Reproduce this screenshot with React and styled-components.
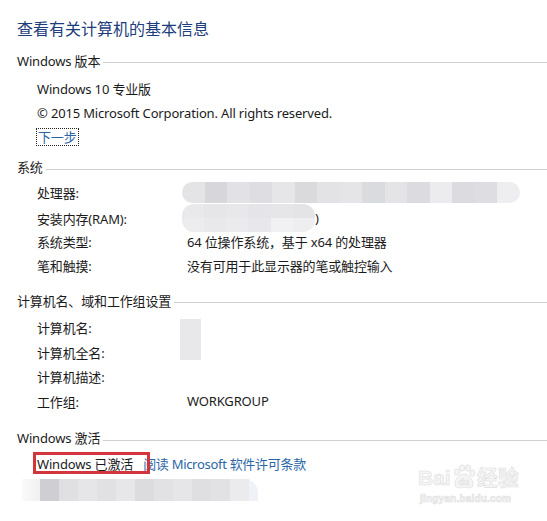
import React from "react";
import styled, { createGlobalStyle } from "styled-components";

const Global = createGlobalStyle`
  html, body { margin: 0; padding: 0; background: #fff; }
  body {
    font-family: "Noto Sans", "Noto Sans CJK SC", sans-serif;
    color: #1b1b1b;
    letter-spacing: -0.16px;
    overflow: hidden;
  }
`;

const Page = styled.div`
  position: relative;
  width: 547px;
  height: 521px;
  padding: 16px 0 0 17px;
  box-sizing: border-box;
  display: flex;
  flex-direction: column;
  overflow: hidden;
`;

const Title = styled.h1`
  margin: 0;
  height: 24px;
  line-height: 24px;
  font-size: 16px;
  font-weight: 400;
  letter-spacing: 0;
  color: #1d3d7c;
  font-family: "Noto Sans CJK SC", sans-serif;
`;

const Section = styled.section`
  display: flex;
  flex-direction: column;
  margin-top: ${(p) => p.$top}px;
`;

const Header = styled.div`
  display: flex;
  align-items: center;
  height: 20px;
  font-size: 13px;
  margin-bottom: ${(p) => p.$gap}px;
  &::after {
    content: "";
    flex: 1;
    height: 1px;
    background: #cfcfcf;
    margin: 5px 0 0 3px;
  }
`;

const Rows = styled.div`
  display: flex;
  flex-direction: column;
  padding-left: 20px;
`;

const Row = styled.div`
  position: relative;
  display: grid;
  grid-template-columns: 150px 1fr;
  align-items: center;
  height: 24.6px;
  font-size: 13px;
`;

const Line = styled.div`
  display: flex;
  align-items: center;
  height: 24.6px;
  font-size: 13px;
`;

const NextLink = styled.span`
  color: #2a66a6;
  font-size: 13px;
  outline: 1px dotted #222;
  outline-offset: 0;
  padding: 0 1px;
  line-height: 16px;
`;

const Mosaic = styled.div`
  display: flex;
  width: ${(p) => p.$w}px;
  height: ${(p) => p.$h}px;
  border-radius: ${(p) => p.$h / 2}px;
  overflow: hidden;
  margin-left: -5px;
`;

const Cell = styled.div`
  flex: 1;
  background: ${(p) => p.$c};
`;

const Mosaic2 = styled.div`
  display: grid;
  grid-template-columns: repeat(${(p) => p.$cols}, 1fr);
  grid-template-rows: repeat(2, 1fr);
  width: ${(p) => p.$w}px;
  height: ${(p) => p.$h}px;
  border-radius: 12px;
  overflow: hidden;
  margin-left: -5px;
`;

const ValueWrap = styled.div`
  display: flex;
  align-items: center;
`;

const NameBlur = styled.div`
  position: absolute;
  left: 143px;
  top: 4px;
  width: 21px;
  height: 41px;
  background: #e8e7ea;
`;

const Activated = styled.div`
  position: relative;
  display: flex;
  align-items: center;
  gap: 10px;
  height: 24.6px;
  font-size: 13px;
`;

const RedBox = styled.div`
  position: absolute;
  left: -4px;
  top: 0px;
  width: 111px;
  height: 16px;
  border: 3px solid #d2363c;
`;

const Link = styled.span`
  color: #2a66a6;
  letter-spacing: -0.3px;
`;

const BottomBlur = styled.div`
  display: flex;
  margin: 3px 0 0 5px;
  width: 236px;
  height: 22px;
  background: linear-gradient(90deg, #fafafa 0%, #eeeeef 10%, #f4f4f6 85%, #eef2f8 100%);
  border-radius: 0 14px 0 0;
  padding-left: 18px;
  box-sizing: border-box;
`;

const BlurCell = styled.div`
  width: 19px;
  background: ${(p) => p.$c};
`;

const Watermark = styled.div`
  position: absolute;
  left: 418px;
  top: 464px;
  display: flex;
  flex-direction: column;
  align-items: flex-start;
  color: #f5f5f5;
  -webkit-text-stroke: 0.6px #e0e0e0;
  letter-spacing: 0;
  font-family: "Liberation Sans", "Noto Sans CJK SC", sans-serif;
`;

const MarkTop = styled.div`
  display: flex;
  align-items: flex-end;
  font-size: 21px;
  font-weight: 700;
  line-height: 24px;
`;

const MarkSub = styled.div`
  font-size: 10px;
  font-weight: 700;
  margin-top: 3px;
  margin-left: 2px;
  letter-spacing: 0.2px;
`;

const procColors = ["#e4e3e6", "#d7d6db", "#e2e1e5", "#dedde1", "#e6e5e8", "#dadadc", "#e3e3e6", "#e5e5e8", "#dadbdf", "#e4e3e5", "#dcdbdf", "#ecebee", "#dcdbdf", "#dedde2", "#eeeef1"];
const ramColors = ["#e9e8ea", "#e6e5e8", "#e8e7ea", "#e5e4e8", "#e6e6e9", "#e4e4e7", "#ececef", "#e9e9ec", "#ebebee", "#e8e7eb", "#f1f1f3", "#eeeef1"];
const bottomColors = ["#cfced2", "#e0e0e2", "#e6e5e7", "#e1e1e3", "#e7e6e8", "#dcdbdd", "#e2e1e3", "#e6e6e8", "#dfdfe1", "#e2e2e4", "#ebebed"];

export default function App() {
  return (
    <>
      <Global />
      <Page>
        <Title>查看有关计算机的基本信息</Title>

        <Section $top={10}>
          <Header $gap={6}>Windows 版本</Header>
          <Rows>
            <Line>Windows 10 专业版</Line>
            <Line>© 2015 Microsoft Corporation. All rights reserved.</Line>
            <Line>
              <NextLink>下一步</NextLink>
            </Line>
          </Rows>
        </Section>

        <Section $top={7}>
          <Header $gap={3}>系统</Header>
          <Rows>
            <Row>
              <span>处理器:</span>
              <Mosaic $w={338} $h={21}>
                {procColors.map((c, i) => (
                  <Cell key={i} $c={c} />
                ))}
              </Mosaic>
            </Row>
            <Row>
              <span>安装内存(RAM):</span>
              <ValueWrap>
                <Mosaic2 $w={133} $h={28} $cols={6}>
                  {ramColors.map((c, i) => (
                    <Cell key={i} $c={c} />
                  ))}
                </Mosaic2>
                <span>)</span>
              </ValueWrap>
            </Row>
            <Row>
              <span>系统类型:</span>
              <span>64 位操作系统，基于 x64 的处理器</span>
            </Row>
            <Row>
              <span>笔和触摸:</span>
              <span>没有可用于此显示器的笔或触控输入</span>
            </Row>
          </Rows>
        </Section>

        <Section $top={12}>
          <Header $gap={5}>计算机名、域和工作组设置</Header>
          <Rows>
            <Row>
              <span>计算机名:</span>
              <span />
              <NameBlur />
            </Row>
            <Row>
              <span>计算机全名:</span>
              <span />
            </Row>
            <Row>
              <span>计算机描述:</span>
              <span />
            </Row>
            <Row>
              <span>工作组:</span>
              <span>WORKGROUP</span>
            </Row>
          </Rows>
        </Section>

        <Section $top={14}>
          <Header $gap={4}>Windows 激活</Header>
          <Rows>
            <Activated>
              <span>Windows 已激活</span>
              <Link>阅读 Microsoft 软件许可条款</Link>
              <RedBox />
            </Activated>
          </Rows>
          <BottomBlur>
            {bottomColors.map((c, i) => (
              <BlurCell key={i} $c={c} />
            ))}
          </BottomBlur>
        </Section>

        <Watermark>
          <MarkTop>
            <span>Bai</span>
            <svg width="26" height="26" viewBox="0 0 26 26">
              <g fill="#f5f5f5" stroke="#dedede" strokeWidth="0.8">
                <ellipse cx="6" cy="8" rx="2.6" ry="3.2" />
                <ellipse cx="11" cy="4" rx="2.6" ry="3.2" />
                <ellipse cx="17" cy="4" rx="2.6" ry="3.2" />
                <ellipse cx="21.5" cy="9" rx="2.6" ry="3.2" />
                <path d="M13 10 C8 10 3 17 4 21 C5 25 10 24 13 23 C16 24 21 25 22 21 C23 17 18 10 13 10 Z" />
              </g>
              <text x="13" y="21" textAnchor="middle" fontSize="9" fontWeight="700" fill="#f5f5f5" stroke="#dedede" strokeWidth="0.5" fontFamily="Liberation Sans">du</text>
            </svg>
            <span>经验</span>
          </MarkTop>
          <MarkSub>jingyan.baidu.com</MarkSub>
        </Watermark>
      </Page>
    </>
  );
}
